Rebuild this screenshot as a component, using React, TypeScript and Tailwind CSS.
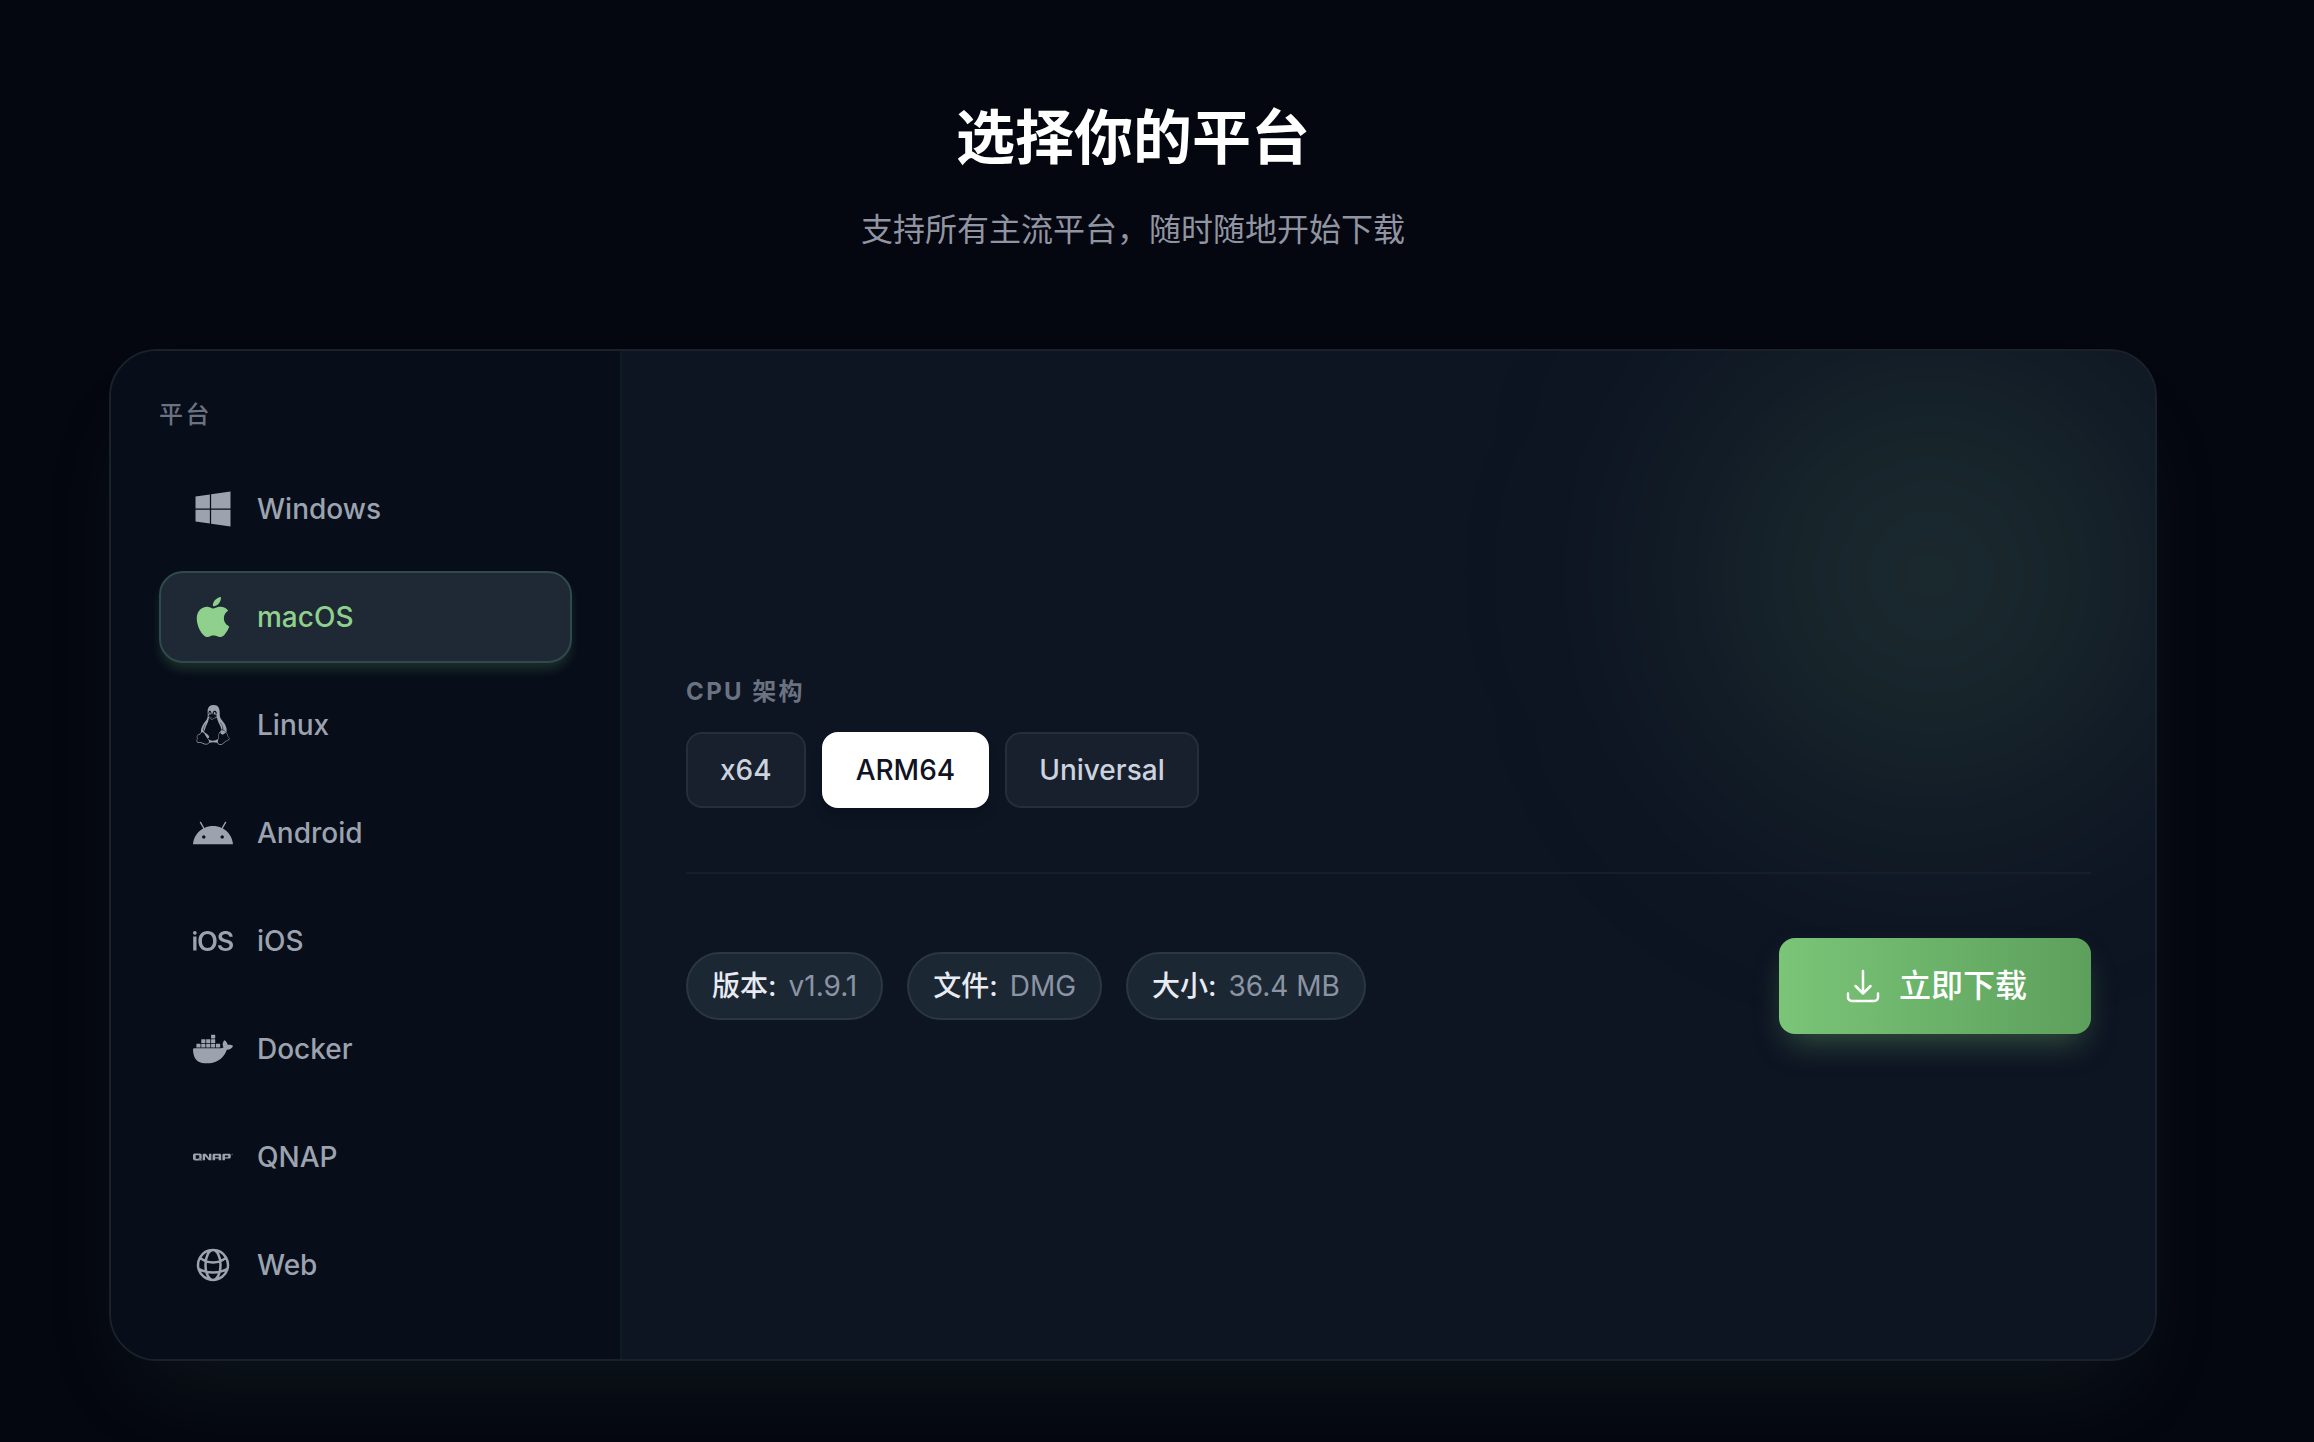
import { HiOutlineArrowDownTray, HiOutlineGlobeAlt } from 'react-icons/hi2'
import { IoLogoWindows } from 'react-icons/io5'
import { SiDocker, SiIos, SiLinux, SiQnap } from 'react-icons/si'

type IconProps = { className?: string }

function AppleIcon({ className }: IconProps) {
  return (
    <svg viewBox="0 0 24 24" fill="currentColor" className={className} aria-hidden="true">
      <path d="M7.078 23.55c-.473-.316-.893-.703-1.244-1.15-.383-.463-.738-.95-1.064-1.454-.766-1.12-1.365-2.345-1.78-3.636-.5-1.502-.743-2.94-.743-4.347 0-1.57.34-2.94 1.002-4.09.49-.89 1.22-1.653 2.1-2.182.85-.53 1.84-.82 2.84-.84.35 0 .73.05 1.13.15.29.08.64.21 1.07.37.55.21.85.34.95.37.32.12.59.17.8.17.16 0 .39-.05.645-.13.145-.05.42-.14.81-.31.386-.14.692-.26.935-.35.37-.11.728-.21 1.05-.26.39-.06.777-.08 1.148-.05.71.05 1.36.2 1.94.42 1.02.41 1.843 1.05 2.457 1.96-.26.16-.5.346-.725.55-.487.43-.9.94-1.23 1.505-.43.77-.65 1.64-.644 2.52.015 1.083.29 2.035.84 2.86.387.6.904 1.114 1.534 1.536.31.21.582.355.84.45-.12.375-.252.74-.405 1.1-.347.807-.76 1.58-1.25 2.31-.432.63-.772 1.1-1.03 1.41-.402.48-.79.84-1.18 1.097-.43.285-.935.436-1.452.436-.35.015-.7-.03-1.034-.127-.29-.095-.576-.202-.856-.323-.293-.134-.596-.248-.905-.34-.38-.1-.77-.148-1.164-.147-.4 0-.79.05-1.16.145-.31.088-.61.196-.907.325-.42.175-.695.29-.855.34-.324.096-.656.154-.99.175-.52 0-1.004-.15-1.486-.45zm6.854-18.46c-.68.34-1.326.484-1.973.436-.1-.646 0-1.31.27-2.037.24-.62.56-1.18 1-1.68.46-.52 1.01-.95 1.63-1.26.66-.34 1.29-.52 1.89-.55.08.68 0 1.35-.25 2.07-.228.64-.568 1.23-1 1.76-.435.52-.975.95-1.586 1.26z" />
    </svg>
  )
}

function AndroidIcon({ className }: IconProps) {
  return (
    <svg viewBox="0 0 24 24" fill="currentColor" className={className} aria-hidden="true">
      <path d="M17.523 15.3414c-.5511 0-.9993-.4486-.9993-.9997s.4483-.9993.9993-.9993c.5511 0 .9993.4483.9993.9993.0001.5511-.4482.9997-.9993.9997m-11.046 0c-.5511 0-.9993-.4486-.9993-.9997s.4482-.9993.9993-.9993c.5511 0 .9993.4483.9993.9993 0 .5511-.4483.9997-.9993.9997m11.4045-6.02l1.9973-3.4592a.416.416 0 00-.1521-.5676.416.416 0 00-.5676.1521l-2.0223 3.503C15.5902 8.2439 13.8533 7.8508 12 7.8508s-3.5902.3931-5.1367 1.0989L4.841 5.4467a.4161.4161 0 00-.5677-.1521.4157.4157 0 00-.1521.5676l1.9973 3.4592C2.6889 11.1867.3432 14.6589 0 18.761h24c-.3435-4.1021-2.6892-7.5743-6.1185-9.4396" />
    </svg>
  )
}

const platforms = [
  { name: 'Windows', Icon: IoLogoWindows },
  { name: 'macOS', Icon: AppleIcon },
  { name: 'Linux', Icon: SiLinux },
  { name: 'Android', Icon: AndroidIcon },
  { name: 'iOS', Icon: SiIos },
  { name: 'Docker', Icon: SiDocker },
  { name: 'QNAP', Icon: SiQnap },
  { name: 'Web', Icon: HiOutlineGlobeAlt },
]

const archs = ['x64', 'ARM64', 'Universal']

const details = [
  { label: '版本:', value: 'v1.9.1' },
  { label: '文件:', value: 'DMG' },
  { label: '大小:', value: '36.4 MB' },
]

export default function App() {
  return (
    <main className="min-h-screen bg-[#040610] pt-[102px] pb-20 pl-12 pr-24 font-['Inter','Noto_Sans_CJK_SC',sans-serif]">
      <header className="flex flex-col items-center gap-5 text-center">
        <h2 className="text-[59px] leading-[72px] font-bold text-white">选择你的平台</h2>
        <p className="text-[32px] leading-[72px] text-[#9095a1]">支持所有主流平台，随时随地开始下载</p>
      </header>

      <section className="mx-auto mt-[83px] flex max-w-[2048px] overflow-hidden rounded-[48px] border-2 border-[#1a212b] bg-[#0d1422] shadow-[0_50px_100px_-24px_rgba(122,197,120,0.09)]">
        <aside className="w-1/4 border-r-2 border-[#111b24] bg-[#070d19] p-12">
          <h3 className="mb-8 text-2xl font-medium tracking-widest text-[#6b7280]">平台</h3>
          <nav className="flex flex-col gap-4">
            {platforms.map(({ name, Icon }) => (
              <button
                key={name}
                type="button"
                className={
                  name === 'macOS'
                    ? 'flex items-center gap-6 rounded-3xl border-2 border-[#2f4a4b] bg-[#1e2935] px-8 py-6 text-[28px] leading-10 font-medium text-[#8fd18c] shadow-[0_8px_12px_-2px_rgba(122,197,120,0.2)]'
                    : 'flex items-center gap-6 rounded-3xl border-2 border-transparent px-8 py-6 text-[28px] leading-10 font-medium text-[#9ca3af]'
                }
              >
                <Icon className="size-10 shrink-0" />
                {name}
              </button>
            ))}
          </nav>
        </aside>

        <div className="relative flex flex-1 flex-col justify-center p-16">
          <div className="absolute top-0 right-0 size-112 rounded-full bg-[#7ac588]/15 blur-[128px]" />

          <div className="relative border-b-2 border-[#171e2a] pb-16">
            <h3 className="mb-6 text-2xl font-bold tracking-widest text-[#6b7280]">CPU 架构</h3>
            <div className="flex flex-wrap gap-4">
              {archs.map((arch) => (
                <button
                  key={arch}
                  type="button"
                  className={
                    arch === 'ARM64'
                      ? 'rounded-2xl border-2 border-white bg-white px-8 py-4 text-[28px] leading-10 font-medium text-[#111322] shadow-lg'
                      : 'rounded-2xl border-2 border-[#262e3b] bg-[#181f2d] px-8 py-4 text-[28px] leading-10 font-medium text-[#ccd3df]'
                  }
                >
                  {arch}
                </button>
              ))}
            </div>
          </div>

          <div className="relative flex flex-wrap items-center justify-between gap-6 pt-16">
            <div className="flex flex-wrap gap-6">
              {details.map(({ label, value }) => (
                <div
                  key={label}
                  className="flex gap-3 rounded-full border-2 border-[#2b3643] bg-[#1c2734] px-6 py-3 text-[28px] leading-10 text-[#8b94a3]"
                >
                  <span className="font-medium text-[#e8ebf2]">{label}</span>
                  {value}
                </div>
              ))}
            </div>
            <button
              type="button"
              className="flex items-center gap-4 rounded-2xl bg-linear-to-r from-[#7ac578] to-[#5da05c] px-16 py-6 text-[32px] leading-[48px] font-medium text-white shadow-[0_16px_32px_-8px_rgba(122,197,120,0.35)]"
            >
              <HiOutlineArrowDownTray className="size-10" />
              立即下载
            </button>
          </div>
        </div>
      </section>
    </main>
  )
}
